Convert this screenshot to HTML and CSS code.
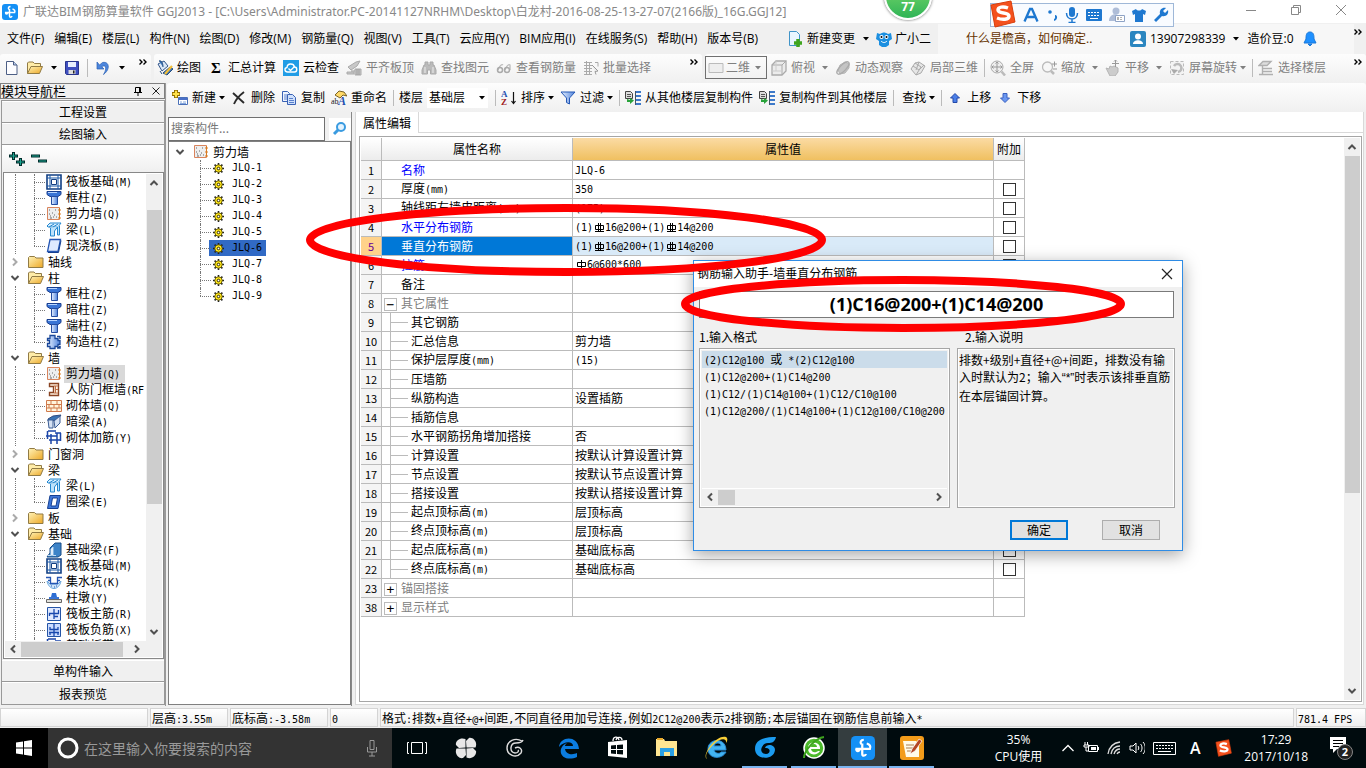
FILE: index.html
```html
<!DOCTYPE html>
<html lang="zh-CN">
<head>
<meta charset="utf-8">
<title>广联达BIM钢筋算量软件 GGJ2013</title>
<link rel="stylesheet" href="styles.css">
</head>
<body>
<svg class="defs" aria-hidden="true">
<defs>
<linearGradient id="gb" x1="0" x2="1"><stop offset="0" stop-color="#e8f1ff"/><stop offset="1" stop-color="#4f83dc"/></linearGradient>
<linearGradient id="gy" x1="0" y1="0" x2="1" y2="1"><stop offset="0" stop-color="#fff3b8"/><stop offset="1" stop-color="#eda826"/></linearGradient>
<symbol id="logo" viewBox="0 0 16 16"><rect width="16" height="16" rx="3" fill="#1590f5"/><path d="M8.500 2.500C6.500 2.500 6 4 6.800 5.500M7.500 5v7c0 1.500 2 1.500 2.500 0M3 8.500h9.500M3.500 8.500c0 2 2 2 2.500 0M10.500 5c2 .5 3 2 2 4" fill="none" stroke="#fff" stroke-width="1.500"/></symbol>
<symbol id="dot-gear" viewBox="0 0 11 11"><path d="M5.500 0v11M0 5.500h11M1.600 1.600l7.800 7.800M9.400 1.600l-7.800 7.800" stroke="#222" stroke-width="1.600"/><circle cx="5.500" cy="5.500" r="3.700" fill="#ffe619" stroke="#554b00" stroke-width=".8"/><circle cx="5.500" cy="5.500" r="1.300" fill="#fff" stroke="#332c00"/></symbol>
<symbol id="folder" viewBox="0 0 16 16"><path d="M.5 13.500V3.500l1-1h5l1.500 1.500h7v9.500z" fill="url(#gy)" stroke="#917b45"/></symbol>
<symbol id="folder-open" viewBox="0 0 16 16"><path d="M.5 13.500V3l1-1h4.500L7.500 3.500h6v3" fill="#ffeca8" stroke="#917b45"/><path d="M.5 13.500L4 6.500h11.500l-3 7z" fill="url(#gy)" stroke="#917b45"/></symbol>
<symbol id="raft" viewBox="0 0 16 16"><path d="M1 1h14v14H1z" fill="#fff" stroke="#123f83" stroke-width="1.600"/><path d="M4 1v14M12 1v14M1 4h14M1 12h14" stroke="#1d5aa8"/><path d="M5.500 5.500h5v5h-5z" fill="#fff" stroke="#123f83"/></symbol>
<symbol id="column" viewBox="0 0 16 16"><path d="M1 1.500h14v3l-3 2H4l-3-2z" fill="#3974d5" stroke="#183e8f"/><path d="M2 2.500h9" stroke="#b7d5ff"/><path d="M5.500 6.500h6v8h-6z" fill="url(#gb)" stroke="#244ca0"/></symbol>
<symbol id="wall" viewBox="0 0 16 16"><path d="M1.500 1.500h12v12h-12z" fill="#eee" stroke="#d9845d"/><path d="M3 4h1M6 7h1M4 10h1M8 9h1M9 4h1M5 12h1M10 11h1M7 11h1M3 8h1M4 12h1" stroke="#666"/><path d="M13.500 2v11M12 4h3M12 8h3M12 12h3" stroke="#d97a22"/></symbol>
<symbol id="beam" viewBox="0 0 16 16"><path d="M1 4l3-3h11l-3 4H2z" fill="#d6eeff" stroke="#2588cf"/><path d="M3 5l5-3M7 5l5-3" stroke="#2588cf"/><path d="M4.500 6v8h4v-5l3-4v8h2V4" fill="#bde2fb" stroke="#2588cf"/></symbol>
<symbol id="slab" viewBox="0 0 16 16"><path d="M4 1.500h10.500l-2.500 12H1.500z" fill="#dfeaff" stroke="#2456b4" stroke-width="1.300"/><path d="M2 14.500h10.500l2.500-12" fill="none" stroke="#153f92"/></symbol>
<symbol id="ring" viewBox="0 0 16 16"><path d="M4 1.500h10.500l-2.500 13H1.500z" fill="#3e77d9" stroke="#153f92"/><path d="M6.500 4h5l-1.500 8h-5z" fill="#fff" stroke="#153f92"/></symbol>
<symbol id="struct" viewBox="0 0 16 16"><path d="M4 1.500h5v3h3v2h2v4h-2v2H9v2H4v-2H1.500v-3h2v-3h-2V4.500H4z" fill="url(#gb)" stroke="#1a4799" stroke-width="1.300"/><path d="M11 2.500h3M14 5v-3M11 14h3v-2" stroke="#1a4799" stroke-width="1.500"/></symbol>
<symbol id="door" viewBox="0 0 16 16"><path d="M3.500 1.500h9v12h-9v-3h4v-6h-4z" fill="#fff2e2" stroke="#8a4423" stroke-width="1.400"/><path d="M9.500 4v7M8 4h4M9 7.500h3M8 11h4" stroke="#c07048"/></symbol>
<symbol id="brick" viewBox="0 0 16 16"><path d="M.5 2.500h15v11H.5z" fill="#fff4dd" stroke="#cf7a4c"/><path d="M1 6.500h14M1 10h14M5 3v3M11 3v3M8 7v3M3 7v3M13 7v3M5 10v3M11 10v3" stroke="#cf7a4c"/></symbol>
<symbol id="hidden-beam" viewBox="0 0 16 16"><path d="M2 5l5-3 8-1-4 5-9 1z" fill="#3974b5" stroke="#2d4a80"/><path d="M2 6h5v8H3zM8 7l6-5v7l-5 5z" fill="#d6e2f4" stroke="#3a5c94"/></symbol>
<symbol id="rebar" viewBox="0 0 16 16"><path d="M2 1h8M1.500 1v8M0 6h11M5 4v10M11 3v11M3 10h12M14.500 3v8M9 3h6" fill="none" stroke="#1c46a8" stroke-width="1.500"/></symbol>
<symbol id="fbeam" viewBox="0 0 16 16"><path d="M1 15l3-4V6l5-5h6v12l-3 2z" fill="#3d83c7" stroke="#174a85"/><path d="M2 13.500h3V7l2-2v8.500h3" fill="#fff" stroke="#c3ddf5"/></symbol>
<symbol id="pit" viewBox="0 0 16 16"><path d="M1 7c2 10 12 10 14 0l-3 3H4z" fill="#cfe6fb" stroke="#6aa6dc"/><path d="M0 3.500h4.500v6h7v-6H16M2 6.500h2M12 6.500h2" fill="none" stroke="#2456b4" stroke-width="1.300"/><path d="M5 12h1M8 13h1M10 12h1" stroke="#2456b4"/></symbol>
<symbol id="pier" viewBox="0 0 16 16"><path d="M5 7l1-4h4l1 4z" fill="#2d6ed3"/><path d="M3 7h10v2H3z" fill="#3974d5"/><path d="M.5 9.500h15v3H.5z" fill="#e3e3de" stroke="#666"/></symbol>
<symbol id="mainbar" viewBox="0 0 16 16"><path d="M1.500 1.500h13v13h-13z" fill="#dfe9ff" stroke="#2454a6"/><path d="M8 3v10M3.500 10V7.500h9V4M8 10.500h4" fill="none" stroke="#1747ad" stroke-width="1.300"/></symbol>
<symbol id="negbar" viewBox="0 0 16 16"><path d="M1.500 1.500h13v13h-13z" fill="#cbdcff" stroke="#2454a6"/><path d="M8 2v12M4 5v2.500h8V5M3 10.500h10M4 11v2M12 11v2" fill="none" stroke="#1747ad" stroke-width="1.300"/></symbol>
<symbol id="new" viewBox="0 0 16 16"><path d="M2.500 1.500h7l3.500 3.500v9.500h-10.500z" fill="#fdfdff" stroke="#4d5f85"/><path d="M9.500 1.500V5H13" fill="#bccdec" stroke="#4d5f85"/></symbol>
<symbol id="save" viewBox="0 0 16 16"><path d="M1.500 1.500h13v13h-12l-1-1z" fill="#3f4fc0" stroke="#28348c"/><path d="M4 2h8v5H4z" fill="#e8efff"/><path d="M4.500 10h7v4h-7z" fill="#ddd"/><path d="M9 10.500h1.500v3H9z" fill="#222"/></symbol>
<symbol id="undo" viewBox="0 0 16 16"><path d="M2 2v7h7L6.800 6.800C10.500 4 12.500 8 8.500 14.500 16 9 14 1 7.500 2.500L4.500 5z" fill="#4c86dc" stroke="#2a60b5" stroke-width=".7"/></symbol>
<symbol id="paint" viewBox="0 0 16 16"><path d="M1 4l6-3 4 5-6 5z" fill="#dbe8f7" stroke="#34568a"/><path d="M2 1c3-1 4 3 4 6M3 11l2 3M6 13l7-6 3 2-6 6z" fill="#3973b8" stroke="#244b7c"/><path d="M8 14l7-8" stroke="#f4bf38" stroke-width="2"/></symbol>
<symbol id="cloud" viewBox="0 0 16 16"><rect width="16" height="16" fill="#219de6"/><path d="M4.500 12C1.500 12 1 8 4 7.500 4.500 3 10.500 3 11.500 7c3 0 3 5 0 5z" fill="#219de6" stroke="#fff" stroke-width="1.400"/><path d="M5.500 8.500l2 2 4-4" stroke="#fff" fill="none" stroke-width="1.300"/></symbol>
<symbol id="align" viewBox="0 0 16 16"><path d="M2 7l8-5 4-1-3 5-6 4zM1 12h7v2H1zM9 9h6v6H9z" fill="#c8c8c8" stroke="#aaa"/><path d="M5 11h4M11 9v6M13 9v6" stroke="#999"/></symbol>
<symbol id="binoc" viewBox="0 0 16 16"><path d="M3 5h1V2h3v3h2V2h3v3h1l2 5v4H9.500v-4h-3v4H1v-4z" fill="#bbb" stroke="#aaa"/><path d="M4 7v6M12 7v6" stroke="#eee"/></symbol>
<symbol id="glasses" viewBox="0 0 16 16"><path d="M2 10c1-4 4-6 5-5M9 10c1-4 4-6 5-5v5" fill="none" stroke="#bbb" stroke-width="1.300"/><circle cx="4" cy="10" r="2.500" fill="none" stroke="#aaa" stroke-width="1.500"/><circle cx="11" cy="10" r="2.500" fill="none" stroke="#aaa" stroke-width="1.500"/></symbol>
<symbol id="batch" viewBox="0 0 16 16"><path d="M1 2.500h8M1 5.500h8M1 8.500h8M1 11.500h8M3.500 1v13M6.500 2v12M12 2.500h3v4M1 14.500h8" stroke="#aaa" fill="none"/><path d="M9 5l6 6-3 .5 1 3" fill="#eee" stroke="#999"/></symbol>
<symbol id="cube" viewBox="0 0 16 16"><path d="M1 5l4-4h10v10l-4 4H1z" fill="#ececec" stroke="#aaa" stroke-width="1.300"/><path d="M1 5h10v10M11 5l4-4" fill="none" stroke="#aaa"/><path d="M5 1v10H1M5 11h6" fill="none" stroke="#ccc"/></symbol>
<symbol id="orbit" viewBox="0 0 16 16"><path d="M5 5l5-3 4 2v4l-4 5-5 1-2-4z" fill="#c4c4c4" stroke="#b4b4b4"/><ellipse cx="8" cy="8" rx="8" ry="3" transform="rotate(-45 8 8)" fill="none" stroke="#aaa" stroke-width="1.300"/></symbol>
<symbol id="local3d" viewBox="0 0 16 16"><path d="M1 9l4-6 4-1 6 4-4 7-5 2z" fill="#e6e6e6" stroke="#aaa"/><path d="M5 3l6 4-5 8M3 6l6 4 5-5M9 2L6 10" fill="none" stroke="#aaa"/></symbol>
<symbol id="fit" viewBox="0 0 16 16"><circle cx="7" cy="7" r="6" fill="#eee" stroke="#aaa"/><path d="M7 2v10M2 7h10M5.500 3.500L7 2l1.500 1.500M5.500 10.500L7 12l1.500-1.500M3.500 5.500L2 7l1.500 1.500M10.500 5.500L12 7l-1.500 1.500" fill="none" stroke="#999"/><path d="M11.500 11.500l3.500 4" stroke="#bbb" stroke-width="2.500"/></symbol>
<symbol id="zoomer" viewBox="0 0 16 16"><circle cx="6.500" cy="7" r="5" fill="#f7f7f7" stroke="#bbb" stroke-width="1.300"/><path d="M10 11l3 3" stroke="#bbb" stroke-width="2.500"/><path d="M11 4h5M13.500 1.500v5M12 9h4" stroke="#999"/></symbol>
<symbol id="hand" viewBox="0 0 16 16"><path d="M1 8l3 1 1-3 2 1 2-1 4 2v4l-3 4H5z" fill="#ccc" stroke="#b4b4b4"/><path d="M10.500 0v7M7 3.500h7M9 1.500L10.500 0 12 1.500" fill="none" stroke="#999"/></symbol>
<symbol id="rotate" viewBox="0 0 16 16"><path d="M1.500 1.500h13v13h-13z" fill="#f3f3f3" stroke="#bbb" stroke-dasharray="3 2"/><path d="M5 6a4 4 0 1 1 4 6" fill="none" stroke="#bbb" stroke-width="2.500"/><path d="M2 9l3 5 4-4z" fill="#aaa"/></symbol>
<symbol id="floors" viewBox="0 0 16 16"><path d="M1 5.500l4-4h8l-4 4zM4 8.500h10M4 11.500h10M1 14.500h14M4.500 6v8" fill="#ddd" stroke="#b0b0b0" stroke-width="1.400"/></symbol>
<symbol id="add" viewBox="0 0 16 16"><path d="M4 0v8M0 4h8" stroke="#8e6b00" stroke-width="4"/><path d="M4 .7v6.600M.7 4h6.600" stroke="#ffe14a" stroke-width="2.200"/><path d="M6.500 7.500h9v7h-9z" fill="#fff" stroke="#4a70b8"/><path d="M7 8h8v2H7z" fill="#4a70c8"/><path d="M8 12h2M11 12h3M8 13.500h6" stroke="#86a7dc"/></symbol>
<symbol id="del" viewBox="0 0 16 16"><path d="M2 3l11 10M13 2C9 5 5 9 3 14" fill="none" stroke="#2b2b2b" stroke-width="1.900"/></symbol>
<symbol id="copy" viewBox="0 0 16 16"><path d="M1.500 1.500h5l2 2v8h-7z" fill="#eef4ff" stroke="#3a62b5"/><path d="M6.500 4.500h5l3 3v7h-8z" fill="#cfe0fb" stroke="#3a62b5"/><path d="M3 5h3M3 7h3M3 9h3M8 8.500h4M8 10.500h5M8 12.500h5" stroke="#5a80cc"/></symbol>
<symbol id="rename" viewBox="0 0 16 16"><path d="M4 5l4-4 5 1 3 4-4-1-3 3z" fill="#ffd968" stroke="#7a6326"/><text x="0" y="14" font-size="8" font-family="Liberation Serif" fill="#222">ab</text><text x="7" y="15" font-size="12" font-weight="bold" font-style="italic" font-family="Liberation Serif" fill="#1f50b0">A</text></symbol>
<symbol id="sort" viewBox="0 0 16 16"><text x="0" y="7" font-size="9" font-family="Liberation Serif" font-weight="bold" fill="#1f50b0">A</text><text x="0" y="15" font-size="9" font-family="Liberation Serif" font-weight="bold" fill="#a02020">Z</text><path d="M12.500 2v11M10.500 11l2 2.500 2-2.500" fill="none" stroke="#111" stroke-width="1.200"/></symbol>
<symbol id="filter" viewBox="0 0 16 16"><path d="M1 2h14L9.500 8v6l-3-1.500V8z" fill="url(#gb)" stroke="#2558b5"/></symbol>
<symbol id="copyfloor" viewBox="0 0 16 16"><path d="M.5 1.500h5l2 2v5h-7z" fill="#ddd" stroke="#444"/><path d="M2 4.500h4M2 6.500h4" stroke="#555"/><path d="M11 1h5v2h-5zM11 5h5v2h-5zM11 9h5v2h-5zM11 13h5v2h-5z" fill="#3d79c9"/><path d="M10.500 1v14" stroke="#456"/><path d="M2 9v3h3v2l4-3.500L5 8v2z" fill="#29a33b"/></symbol>
<symbol id="up" viewBox="0 0 10 10"><path d="M5 .5L9.500 5H7v4.500H3V5H.5z" fill="#4a7fe8" stroke="#2448a8"/></symbol>
<symbol id="dn" viewBox="0 0 10 10"><path d="M5 9.500L9.500 5H7V.5H3V5H.5z" fill="#6a97f0" stroke="#3a60c0"/></symbol>
<symbol id="tri" viewBox="0 0 6 4"><path d="M0 0h6L3 3.500z" fill="currentColor"/></symbol>
<symbol id="more" viewBox="0 0 8 6"><path d="M.5 .5L3 3 .5 5.500M4.500 .5L7 3 4.500 5.500" fill="none" stroke="#000" stroke-width="1.400"/></symbol>
<symbol id="chev" viewBox="0 0 10 10"><path d="M1.500 3L5 6.500 8.500 3" fill="none" stroke="#505050" stroke-width="2"/></symbol>
<symbol id="chevr" viewBox="0 0 10 10"><path d="M3 1.500L6.500 5 3 8.500" fill="none" stroke="currentColor" stroke-width="2"/></symbol>
<symbol id="chevl" viewBox="0 0 10 10"><path d="M7 1.500L3.500 5 7 8.500" fill="none" stroke="#505050" stroke-width="2"/></symbol>
<symbol id="chevu" viewBox="0 0 10 10"><path d="M1.500 7L5 3.500 8.500 7" fill="none" stroke="#505050" stroke-width="2"/></symbol>
<symbol id="bar3" viewBox="0 0 12 12"><path d="M2.500 3.500h8v4h-8zM5.500 1v9M7.500 1v9M2 9.500h9" fill="none" stroke="#000"/></symbol>
<symbol id="bar1" viewBox="0 0 12 12"><path d="M2.500 3.500h8v4h-8zM6.500 1v10" fill="none" stroke="#000"/></symbol>
<symbol id="sogou" viewBox="0 0 28 28"><path d="M3 5l20-4 4 21-20 5z" fill="#f4511e" stroke="#d83e0c"/><path d="M20 8c-5-2-10-1-10 2 0 4 11 2 11 6s-7 4-12 2" fill="none" stroke="#fff" stroke-width="3.500"/></symbol>
</defs>
</svg>

<header class="titlebar">
  <svg class="i16"><use href="#logo"/></svg>
  <h1>广联达BIM钢筋算量软件 GGJ2013 - [C:\Users\Administrator.PC-20141127NRHM\Desktop\白龙村-2016-08-25-13-27-07(2166版)_16G.GGJ12]</h1>
  <div class="winbtns">
    <button aria-label="最小化"><svg width="12" height="12"><path d="M1 6.500h10" stroke="#888"/></svg></button>
    <button aria-label="还原"><svg width="12" height="12"><path d="M1.500 3.500h7v7h-7zM3.500 3V1.500h7v7H9" fill="none" stroke="#888"/></svg></button>
    <button aria-label="关闭"><svg width="12" height="12"><path d="M1 1l10 10M11 1L1 11" stroke="#888"/></svg></button>
  </div>
</header>

<nav class="menubar">
  <div class="menus">
    <button>文件(F)</button><button>编辑(E)</button><button>楼层(L)</button><button>构件(N)</button><button>绘图(D)</button><button>修改(M)</button><button>钢筋量(Q)</button><button>视图(V)</button><button>工具(T)</button><button>云应用(Y)</button><button>BIM应用(I)</button><button>在线服务(S)</button><button>帮助(H)</button><button>版本号(B)</button>
  </div>
  <button class="tool"><svg class="i16" viewBox="0 0 16 16"><path d="M2.500 .5h7l3 3v11h-10z" fill="#e9f6ff" stroke="#4094c8"/><path d="M11 8v8M7 12h8" stroke="#3fa51e" stroke-width="3.500"/></svg>新建变更<svg class="tri"><use href="#tri"/></svg></button>
  <button class="tool helper"><svg class="i16" viewBox="0 0 16 16"><path d="M1 2l3 1c3-2 5-2 8 0l3-1 1 6-3 2v4l-3 2H6l-3-2v-4L0 8z" fill="#1c8fe0"/><circle cx="5.500" cy="6" r="2" fill="#fff"/><circle cx="10.500" cy="6" r="2" fill="#fff"/><circle cx="5.500" cy="6" r="1"/><circle cx="10.500" cy="6" r="1"/><path d="M5 10c2 2 4 2 6 0" stroke="#fff" fill="none"/></svg>广小二</button>
  <a class="news" href="#">什么是檐高，如何确定..</a>
  <div class="account">
    <button class="tool"><svg class="i16" viewBox="0 0 16 16"><rect width="16" height="16" rx="2" fill="#2b86c0"/><circle cx="8" cy="5.500" r="3" fill="#fff"/><path d="M3 13c0-5 10-5 10 0z" fill="#fff"/></svg>13907298339<svg class="tri"><use href="#tri"/></svg></button>
    <span class="beans">造价豆:0</span>
    <button class="tool" aria-label="通知"><svg class="i16" viewBox="0 0 16 16"><path d="M8 1c-4 0-4 4-4 7l-2 4h12l-2-4c0-3 0-7-4-7zM6 13h4l-2 2z" fill="#1e90ff" stroke="#1877d8"/></svg></button>
  </div>
  <svg class="more"><use href="#more"/></svg>
</nav>

<div class="toolbars">
  <div class="strip files">
    <button class="tool" aria-label="新建"><svg class="i16"><use href="#new"/></svg></button>
    <button class="tool" aria-label="打开"><svg class="i16"><use href="#folder-open"/></svg><svg class="tri"><use href="#tri"/></svg></button>
    <button class="tool" aria-label="保存"><svg class="i16"><use href="#save"/></svg></button>
    <i class="sep"></i>
    <button class="tool" aria-label="撤销"><svg class="i16"><use href="#undo"/></svg><svg class="tri"><use href="#tri"/></svg></button>
    <svg class="more"><use href="#more"/></svg>
  </div>
  <div class="strip draw">
    <button class="tool"><svg class="i16"><use href="#paint"/></svg>绘图</button>
    <button class="tool"><b class="sigma">Σ</b>汇总计算</button>
    <button class="tool"><svg class="i16"><use href="#cloud"/></svg>云检查</button>
    <button class="tool off"><svg class="i16"><use href="#align"/></svg>平齐板顶</button>
    <button class="tool off"><svg class="i16"><use href="#binoc"/></svg>查找图元</button>
    <button class="tool off"><svg class="i16"><use href="#glasses"/></svg>查看钢筋量</button>
    <button class="tool off"><svg class="i16"><use href="#batch"/></svg>批量选择</button>
    <svg class="more"><use href="#more"/></svg>
  </div>
  <div class="strip view">
    <button class="tool off boxed"><svg class="i16" viewBox="0 0 16 16"><path d="M1 3.500h14v9H1z" fill="#eee" stroke="#bbb"/></svg>二维<svg class="tri"><use href="#tri"/></svg></button>
    <button class="tool off"><svg class="i16"><use href="#cube"/></svg>俯视<svg class="tri wide"><use href="#tri"/></svg></button>
    <button class="tool off"><svg class="i16"><use href="#orbit"/></svg>动态观察</button>
    <button class="tool off"><svg class="i16"><use href="#local3d"/></svg>局部三维</button>
    <i class="sep"></i>
    <button class="tool off"><svg class="i16"><use href="#fit"/></svg>全屏</button>
    <button class="tool off"><svg class="i16"><use href="#zoomer"/></svg>缩放<svg class="tri wide"><use href="#tri"/></svg></button>
    <button class="tool off"><svg class="i16"><use href="#hand"/></svg>平移<svg class="tri wide"><use href="#tri"/></svg></button>
    <button class="tool off"><svg class="i16"><use href="#rotate"/></svg>屏幕旋转<svg class="tri near"><use href="#tri"/></svg></button>
    <i class="sep"></i>
    <button class="tool off"><svg class="i16"><use href="#floors"/></svg>选择楼层</button>
    <svg class="more"><use href="#more"/></svg>
  </div>
</div>

<main class="work">
  <aside class="nav">
    <div class="navtitle"><h2>模块导航栏</h2>
      <svg width="10" height="10"><path d="M2.500 1.500h5v5h-5zM6.500 1v6M1 6.500h8M5 7v3" fill="none" stroke="#000"/></svg>
      <svg width="10" height="10"><path d="M1.500 1.500l7 7M8.500 1.500l-7 7" stroke="#222"/></svg></div>
    <div class="navbody">
      <button class="mod">工程设置</button>
      <button class="mod">绘图输入</button>
      <div class="expand">
        <svg width="40" height="16"><path d="M5.500 0v8M1 4h9M12.500 6v8M8 10h9M23 4h9M30 9h9" stroke="#002b2b" stroke-width="3"/><path d="M5.500 1v6M2 4h7M12.500 7v6M9 10h7M24 4h7M31 9h7" stroke="#1aa58f"/></svg>
      </div>
      <div class="treebox">
        <div class="treeclip">
          <ul class="tree">
            <li><ul>
              <li><svg><use href="#raft"/></svg><span>筏板基础<span class="m">(M)</span></span></li>
              <li><svg><use href="#column"/></svg><span>框柱<span class="m">(Z)</span></span></li>
              <li><svg><use href="#wall"/></svg><span>剪力墙<span class="m">(Q)</span></span></li>
              <li><svg><use href="#beam"/></svg><span>梁<span class="m">(L)</span></span></li>
              <li><svg><use href="#slab"/></svg><span>现浇板<span class="m">(B)</span></span></li>
            </ul></li>
            <li><div class="branch shut"><svg class="tw"><use href="#chevr"/></svg><svg><use href="#folder"/></svg><span>轴线</span></div></li>
            <li><div class="branch"><svg class="tw"><use href="#chev"/></svg><svg><use href="#folder-open"/></svg><span>柱</span></div><ul>
              <li><svg><use href="#column"/></svg><span>框柱<span class="m">(Z)</span></span></li>
              <li><svg><use href="#column"/></svg><span>暗柱<span class="m">(Z)</span></span></li>
              <li><svg><use href="#column"/></svg><span>端柱<span class="m">(Z)</span></span></li>
              <li><svg><use href="#struct"/></svg><span>构造柱<span class="m">(Z)</span></span></li>
            </ul></li>
            <li><div class="branch"><svg class="tw"><use href="#chev"/></svg><svg><use href="#folder-open"/></svg><span>墙</span></div><ul>
              <li><svg><use href="#wall"/></svg><span class="cur">剪力墙<span class="m">(Q)</span></span></li>
              <li><svg><use href="#door"/></svg><span>人防门框墙<span class="m">(RF</span></span></li>
              <li><svg><use href="#brick"/></svg><span>砌体墙<span class="m">(Q)</span></span></li>
              <li><svg><use href="#hidden-beam"/></svg><span>暗梁<span class="m">(A)</span></span></li>
              <li><svg><use href="#rebar"/></svg><span>砌体加筋<span class="m">(Y)</span></span></li>
            </ul></li>
            <li><div class="branch shut"><svg class="tw"><use href="#chevr"/></svg><svg><use href="#folder"/></svg><span>门窗洞</span></div></li>
            <li><div class="branch"><svg class="tw"><use href="#chev"/></svg><svg><use href="#folder-open"/></svg><span>梁</span></div><ul>
              <li><svg><use href="#beam"/></svg><span>梁<span class="m">(L)</span></span></li>
              <li><svg><use href="#ring"/></svg><span>圈梁<span class="m">(E)</span></span></li>
            </ul></li>
            <li><div class="branch shut"><svg class="tw"><use href="#chevr"/></svg><svg><use href="#folder"/></svg><span>板</span></div></li>
            <li><div class="branch"><svg class="tw"><use href="#chev"/></svg><svg><use href="#folder-open"/></svg><span>基础</span></div><ul>
              <li><svg><use href="#fbeam"/></svg><span>基础梁<span class="m">(F)</span></span></li>
              <li><svg><use href="#raft"/></svg><span>筏板基础<span class="m">(M)</span></span></li>
              <li><svg><use href="#pit"/></svg><span>集水坑<span class="m">(K)</span></span></li>
              <li><svg><use href="#pier"/></svg><span>柱墩<span class="m">(Y)</span></span></li>
              <li><svg><use href="#mainbar"/></svg><span>筏板主筋<span class="m">(R)</span></span></li>
              <li><svg><use href="#negbar"/></svg><span>筏板负筋<span class="m">(X)</span></span></li>
              <li><svg><use href="#rebar"/></svg><span>基础板带<span class="m">(W)</span></span></li>
            </ul></li>
          </ul>
        </div>
        <div class="vbar"><svg><use href="#chevu"/></svg><i></i><svg><use href="#chev"/></svg></div>
        <div class="hbar"><svg><use href="#chevl"/></svg><i></i><svg><use href="#chevr"/></svg></div>
      </div>
      <button class="mod">单构件输入</button>
      <button class="mod">报表预览</button>
    </div>
  </aside>

  <div class="right">
    <div class="strip edit">
      <button class="tool"><svg class="i16"><use href="#add"/></svg>新建<svg class="tri near"><use href="#tri"/></svg></button>
      <button class="tool"><svg class="i16"><use href="#del"/></svg>删除</button>
      <button class="tool"><svg class="i16"><use href="#copy"/></svg>复制</button>
      <button class="tool"><svg class="i16"><use href="#rename"/></svg>重命名</button>
      <i class="sep"></i>
      <label for="floor">楼层</label>
      <span class="pick"><select id="floor"><option>基础层</option></select><svg class="tri"><use href="#tri"/></svg></span>
      <i class="sep"></i>
      <button class="tool"><svg class="i16"><use href="#sort"/></svg>排序<svg class="tri near"><use href="#tri"/></svg></button>
      <button class="tool"><svg class="i16"><use href="#filter"/></svg>过滤<svg class="tri near"><use href="#tri"/></svg></button>
      <i class="sep"></i>
      <button class="tool"><svg class="i16"><use href="#copyfloor"/></svg>从其他楼层复制构件</button>
      <button class="tool"><svg class="i16"><use href="#copyfloor"/></svg>复制构件到其他楼层</button>
      <i class="sep"></i>
      <button class="tool find">查找<svg class="tri near"><use href="#tri"/></svg></button>
      <i class="sep"></i>
      <button class="tool move"><svg class="i10"><use href="#up"/></svg>上移</button>
      <button class="tool move"><svg class="i10"><use href="#dn"/></svg>下移</button>
    </div>
    <div class="panes">
      <section class="parts">
        <div class="search"><input type="text" placeholder="搜索构件..." aria-label="搜索构件"><button aria-label="搜索"><svg width="16" height="16"><circle cx="9" cy="6" r="4" fill="#e3f3ff" stroke="#3a9be0" stroke-width="2"/><path d="M6 9l-4 4" stroke="#3a9be0" stroke-width="3"/></svg></button></div>
        <div class="partlist">
          <div class="branch"><svg class="tw"><use href="#chev"/></svg><svg class="i16"><use href="#wall"/></svg><span>剪力墙</span></div>
          <ul>
            <li><span><svg><use href="#dot-gear"/></svg>JLQ-1</span></li>
            <li><span><svg><use href="#dot-gear"/></svg>JLQ-2</span></li>
            <li><span><svg><use href="#dot-gear"/></svg>JLQ-3</span></li>
            <li><span><svg><use href="#dot-gear"/></svg>JLQ-4</span></li>
            <li><span><svg><use href="#dot-gear"/></svg>JLQ-5</span></li>
            <li><span class="on"><svg><use href="#dot-gear"/></svg>JLQ-6</span></li>
            <li><span><svg><use href="#dot-gear"/></svg>JLQ-7</span></li>
            <li><span><svg><use href="#dot-gear"/></svg>JLQ-8</span></li>
            <li><span><svg><use href="#dot-gear"/></svg>JLQ-9</span></li>
          </ul>
        </div>
      </section>
      <section class="props">
        <div class="tabs"><button class="tab">属性编辑</button></div>
        <div class="grid">
          <table>
            <colgroup><col class="c1"><col class="c2"><col class="c3"><col class="c4"></colgroup>
            <thead><tr><th></th><th>属性名称</th><th class="hot">属性值</th><th>附加</th></tr></thead>
            <tbody>
              <tr><td>1</td><td class="key">名称</td><td><span class="m">JLQ-6</span></td><td></td></tr>
              <tr><td>2</td><td>厚度<span class="m">(mm)</span></td><td><span class="m">350</span></td><td><input type="checkbox" aria-label="附加 2"></td></tr>
              <tr><td>3</td><td>轴线距左墙皮距离<span class="m">(mm)</span></td><td><span class="m">(175)</span></td><td><input type="checkbox" aria-label="附加 3"></td></tr>
              <tr><td>4</td><td class="key">水平分布钢筋</td><td><span class="m">(1)<svg><use href="#bar3"/></svg>16@200+(1)<svg><use href="#bar3"/></svg>14@200</span></td><td><input type="checkbox" aria-label="附加 4"></td></tr>
              <tr class="sel"><td>5</td><td>垂直分布钢筋</td><td><span class="m">(1)<svg><use href="#bar3"/></svg>16@200+(1)<svg><use href="#bar3"/></svg>14@200</span></td><td><input type="checkbox" aria-label="附加 5"></td></tr>
              <tr><td>6</td><td class="key">拉筋</td><td><span class="m"><svg><use href="#bar1"/></svg>6@600*600</span></td><td><input type="checkbox" aria-label="附加 6"></td></tr>
              <tr><td>7</td><td>备注</td><td></td><td></td></tr>
              <tr class="grp"><td>8</td><td><button aria-label="折叠">−</button>其它属性</td><td></td><td></td></tr>
              <tr class="sub"><td>9</td><td>其它钢筋</td><td></td><td></td></tr>
              <tr class="sub"><td>10</td><td>汇总信息</td><td>剪力墙</td><td></td></tr>
              <tr class="sub"><td>11</td><td>保护层厚度<span class="m">(mm)</span></td><td><span class="m">(15)</span></td><td></td></tr>
              <tr class="sub"><td>12</td><td>压墙筋</td><td></td><td></td></tr>
              <tr class="sub"><td>13</td><td>纵筋构造</td><td>设置插筋</td><td></td></tr>
              <tr class="sub"><td>14</td><td>插筋信息</td><td></td><td></td></tr>
              <tr class="sub"><td>15</td><td>水平钢筋拐角增加搭接</td><td>否</td><td></td></tr>
              <tr class="sub"><td>16</td><td>计算设置</td><td>按默认计算设置计算</td><td></td></tr>
              <tr class="sub"><td>17</td><td>节点设置</td><td>按默认节点设置计算</td><td></td></tr>
              <tr class="sub"><td>18</td><td>搭接设置</td><td>按默认搭接设置计算</td><td></td></tr>
              <tr class="sub"><td>19</td><td>起点顶标高<span class="m">(m)</span></td><td>层顶标高</td><td></td></tr>
              <tr class="sub"><td>20</td><td>终点顶标高<span class="m">(m)</span></td><td>层顶标高</td><td></td></tr>
              <tr class="sub"><td>21</td><td>起点底标高<span class="m">(m)</span></td><td>基础底标高</td><td><input type="checkbox" aria-label="附加 21"></td></tr>
              <tr class="sub last"><td>22</td><td>终点底标高<span class="m">(m)</span></td><td>基础底标高</td><td><input type="checkbox" aria-label="附加 22"></td></tr>
              <tr class="grp"><td>23</td><td><button aria-label="展开">+</button>锚固搭接</td><td></td><td></td></tr>
              <tr class="grp"><td>38</td><td><button aria-label="展开">+</button>显示样式</td><td></td><td></td></tr>
            </tbody>
          </table>
          <div class="vbar"><svg><use href="#chevu"/></svg><i></i><svg><use href="#chev"/></svg></div>
        </div>
      </section>
    </div>
  </div>
</main>

<footer class="status">
  <span class="s1"></span>
  <span class="s2">层高<span class="m">:3.55m</span></span>
  <span class="s3">底标高<span class="m">:-3.58m</span></span>
  <span class="s4"><span class="m">0</span></span>
  <span class="s5">格式<span class="m">:</span>排数<span class="m">+</span>直径<span class="m">+@+</span>间距<span class="m">,</span>不同直径用加号连接<span class="m">,</span>例如<span class="m">2C12@200</span>表示<span class="m">2</span>排钢筋<span class="m">;</span>本层锚固在钢筋信息前输入<span class="m">*</span></span>
  <span class="s6"><span class="m">781.4 FPS</span></span>
</footer>

<footer class="taskbar">
  <button class="start" aria-label="开始"><svg width="16" height="16"><path d="M0 2.500l7-1v6H0zM8 1.300l8-1.300v7.500H8zM0 8.500h7v6l-7-1zM8 8.500h8V16l-8-1.300z" fill="#fff"/></svg></button>
  <div class="cortana"><svg width="22" height="22"><circle cx="11" cy="11" r="9" fill="none" stroke="#fff" stroke-width="3"/></svg><input type="text" placeholder="在这里输入你要搜索的内容" aria-label="在这里输入你要搜索的内容"><svg width="12" height="18"><path d="M4 1.500h4v9H4zM1.500 8v5h9V8M6 13v4M3 17h6" fill="none" stroke="#999"/></svg></div>
  <div class="apps first">
    <button aria-label="任务视图"><svg width="22" height="16"><path d="M5.500 2.500h11v11h-11zM3 2.500H1.500v11H3M19 2.500h1.500v11H19" fill="none" stroke="#fff"/></svg></button>
    <button aria-label="风车"><svg width="22" height="22"><path d="M10.500 10.500V2C5 0 0 4 1 8l3 3zM11.500 10.500h9C23 5 18 0 14 1l-3 3zM11.500 11.500v9C17 23 22 18 21 14l-3-3zM10.500 11.500h-9C-1 17 4 22 8 21l3-3z" fill="#e8e8e8"/></svg></button>
    <button aria-label="G"><svg width="22" height="22"><path d="M18 4c-7-4-15 0-15 7s9 11 14 5c2-4-2-7-6-5M19 3c-1 3-4 3-7 3-6 0-7 9-1 10 3 0 4-2 3-3" fill="none" stroke="#ddd" stroke-width="1.400"/></svg></button>
  </div>
  <div class="apps">
    <button aria-label="Edge"><svg width="22" height="22"><path d="M1 10C2-1 20-2 21 12H7c1 6 8 6 12 4v4C10 24 1 20 3 12c1-3 3-5 6-6-2 2-2 2-2 3h8C15 4 6 4 1 10z" fill="#0b7ce0"/></svg></button>
    <button aria-label="应用商店"><svg width="22" height="24"><path d="M1 6l19-2v18L1 20z" fill="#fff"/><path d="M6 5c0-5 5-5 6-1M9 4c1-4 6-3 6 0" fill="none" stroke="#fff" stroke-width="1.300"/><path d="M4 9.500l5-.5v4H4zM10 9l6-.5V13h-6zM4 14h5v4l-5-.5zM10 14h6v4.500l-6-.5z" fill="#000b0e"/></svg></button>
    <button aria-label="文件资源管理器"><svg width="22" height="20"><path d="M0 1h8l1 2h12v15H0z" fill="#ffe692"/><path d="M1 0h6v2H1z" fill="#e8a92a"/><path d="M4 10h14v8h-4v-4H8v4H4z" fill="#2ba0e4"/></svg></button>
    <button aria-label="Internet Explorer"><svg width="24" height="24"><path d="M4 13C4 2 22 1 22 14H10c1 4 6 4 7 2h5C18 24 4 23 4 13zM10 10h7c0-4-6-4-7 0z" fill="#42b4f3" stroke="#2b8cd6"/><path d="M3 23C-3 20 12-2 22 1c3 2 0 6 0 6 1-6-7-4-12 1S0 19 3 23z" fill="#f8cf38"/></svg></button>
    <button class="run" aria-label="广联达"><svg width="24" height="24"><path d="M23 1c-8 0-21 1-21 12s19 12 20 1c0-5-8-7-10-2 6-1 6 6 1 6-8 0-5-11 2-11 4 0 7-1 8-6z" fill="#1b9cf0"/></svg></button>
    <button class="run" aria-label="360浏览器"><svg width="24" height="24"><circle cx="12" cy="12" r="10" fill="#4cb92b" stroke="#fff" stroke-width="1.500"/><path d="M6 12c0-8 13-7 12 1H9c1 5 6 3 7 2h2c-3 5-12 5-12-3zM9 11h6c0-4-6-4-6 0z" fill="#fff"/><path d="M2 22c0-8 12-20 20-21" stroke="#3da31e" stroke-width="2" fill="none"/></svg></button>
    <button class="run active" aria-label="钢筋算量"><svg width="24" height="24"><use href="#logo"/></svg></button>
    <button class="run" aria-label="便笺"><svg width="24" height="24"><rect width="24" height="24" rx="3" fill="#f39c1a"/><path d="M3 5h13l3 3v13H6z" fill="#fffbe9"/><path d="M6 9h8M6 12h7M7 15h4" stroke="#a97d50"/><path d="M10 18l2-5 7-10 3 2-7 10z" fill="#b54724" stroke="#fff" stroke-width=".7"/></svg></button>
  </div>
  <div class="tray">
    <div class="two cpu"><span>35%</span><span>CPU使用</span></div>
    <svg width="14" height="10"><path d="M1.500 8L7 2.500 12.500 8" fill="none" stroke="#fff" stroke-width="1.300"/></svg>
    <svg width="16" height="14"><path d="M5.500 4.500h9v6h-9zM15.500 6v3M2 1v3M4.500 1v3M1 4h5v2H1zM3 6v4h2" fill="none" stroke="#fff"/><path d="M8 6h5v3H8z" fill="#fff"/></svg>
    <svg width="14" height="14"><path d="M1 13C2 6 6 2 13 1M4 13c1-5 4-8 9-8M7 13c1-3 3-5 6-5M10 13c1-2 2-2 3-2" fill="none" stroke="#ddd" stroke-width="1.300"/></svg>
    <svg width="16" height="14"><path d="M1 5h3l3-3v10L4 9H1zM9 5c1 1 1 3 0 4M11.500 3c2 2 2 6 0 8M14 1c3 3 3 9 0 12" fill="none" stroke="#fff"/></svg>
    <svg width="23" height="13"><path d="M.5 .5h22v12H.5zM5 9.500h13" fill="none" stroke="#fff"/><path d="M3 3.500h17M3 6.500h17" stroke="#fff" stroke-dasharray="2 1"/></svg>
    <span class="ime">A</span>
    <svg width="18" height="18"><use href="#sogou"/></svg>
    <div class="two clock"><span>17:29</span><span>2017/10/18</span></div>
    <svg class="note" width="26" height="26"><path d="M2 2h16v12H9l-4 4v-4H2z" fill="#fff"/><path d="M5 5.500h10M5 8.500h10M5 11.500h6" stroke="#000"/><circle cx="17" cy="17" r="7.500" fill="#222" stroke="#888"/><text x="17" y="21" text-anchor="middle" font-size="11" font-weight="bold" font-family="Open Sans" fill="#fff">2</text></svg>
  </div>
</footer>

<div class="ball"><span>77</span></div>
<div class="imebar">
  <svg class="s" width="28" height="28"><use href="#sogou"/></svg>
  <svg width="16" height="16"><path d="M1.500 14.500L7 2h2l5.500 12.500M4 10h8" fill="none" stroke="#1e78d0" stroke-width="2.300"/></svg>
  <svg width="12" height="14"><circle cx="4" cy="4" r="1.800" fill="#1e78d0"/><path d="M9 8c2 0 1 4-1 4" fill="none" stroke="#1e78d0" stroke-width="2"/></svg>
  <svg width="14" height="16"><rect x="4" y="0" width="6" height="10" rx="3" fill="#1e78d0"/><path d="M1.500 6c0 8 11 8 11 0M7 12v3M3.500 15.500h7" fill="none" stroke="#1e78d0" stroke-width="1.500"/></svg>
  <svg width="16" height="14"><rect y="1" width="16" height="12" rx="1" fill="#1e78d0"/><path d="M2 4.500h12M2 7.500h12" stroke="#fff" stroke-dasharray="2 1"/><path d="M4 10.500h8" stroke="#fff"/></svg>
  <svg width="16" height="16"><circle cx="7" cy="4" r="3.500" fill="#aebdd8"/><path d="M0 14c0-9 12-9 12 0z" fill="#aebdd8"/><path d="M6.500 8.500h9v6h-9z" fill="#fff" stroke="#8ea3c6"/><path d="M9 10v3M12 10v1M12 12v1" stroke="#666"/></svg>
  <svg width="14" height="14"><path d="M4 1c1 2 5 2 6 0l4 2-1 4-2-1v8H3V6L1 7 0 3z" fill="#1e78d0"/></svg>
  <svg width="16" height="16"><path d="M1 13l6-6C6 2 10 0 13 1l-3 3 2 2 3-3c1 4-2 7-6 6l-6 6z" fill="#1e78d0"/></svg>
</div>

<section class="dialog" role="dialog" aria-labelledby="dt">
  <header><h2 id="dt">钢筋输入助手-墙垂直分布钢筋</h2><button aria-label="关闭"><svg width="12" height="12"><path d="M1 1l10 10M11 1L1 11" stroke="#222" stroke-width="1.200"/></svg></button></header>
  <div class="dbody">
    <input class="expr" type="text" value="(1)C16@200+(1)C14@200" aria-label="钢筋">
    <div class="cols">
      <div class="fmt"><h3>1.输入格式</h3>
        <div class="inset list">
          <ul><li class="on"><span class="m">(2)C12@100</span><span class="or">或</span><span class="m">*(2)C12@100</span></li><li><span class="m">(1)C12@200+(1)C14@200</span></li><li><span class="m">(1)C12/(1)C14@100+(1)C12/C10@100</span></li><li><span class="m">(1)C12@200/(1)C14@100+(1)C12@100/C10@200</span></li></ul>
          <div class="hbar"><svg><use href="#chevl"/></svg><i></i><svg><use href="#chevr"/></svg></div>
        </div>
      </div>
      <div class="desc"><h3>2.输入说明</h3>
        <div class="inset"><p>排数+级别+直径+@+间距，排数没有输入时默认为2；输入<span class="q">“*”</span>时表示该排垂直筋在本层锚固计算。</p></div>
      </div>
    </div>
    <div class="acts"><button class="ok">确定</button><button>取消</button></div>
  </div>
</section>

<svg class="marks" width="1366" height="768" aria-hidden="true"><g fill="none" stroke="#f00" stroke-width="8"><ellipse cx="566" cy="240" rx="256" ry="32"/><ellipse cx="903" cy="304" rx="218" ry="24"/></g></svg>
</body>
</html>
```
FILE: styles.css
```css
* { box-sizing: border-box; }
body {
  margin: 0;
  height: 100vh;
  display: flex;
  flex-direction: column;
  overflow: hidden;
  background: #f0f0f0;
  color: #000;
  font: 12px/16px "Open Sans", "Noto Sans CJK SC", sans-serif;
}
svg { flex: none; display: block; }
button, input, select { font: inherit; color: inherit; margin: 0; padding: 0; border: 0; background: none; border-radius: 0; outline: none; }
h1, h2, h3, ul, p { margin: 0; padding: 0; font: inherit; list-style: none; }
.defs { position: absolute; width: 0; height: 0; }
.m { font-family: "DejaVu Sans Mono", monospace; font-size: 10px; white-space: pre; }
.i16 { width: 16px; height: 16px; }
.i10 { width: 10px; height: 10px; }
.tri { width: 6px; height: 4px; margin-left: 4px; }
.tri.wide { margin-left: 3px; }
.tri.near { margin-left: -1px; }
.more { width: 8px; height: 6px; margin-left: auto; align-self: flex-start; margin-top: 5px; }
.sep { flex: none; width: 1px; height: 18px; background: #bbb; }

/* title bar */
.titlebar { flex: none; height: 23px; background: #fff; color: #888; display: flex; align-items: center; padding: 0 19px 0 2px; gap: 5px; }
.titlebar h1 { flex: 1; white-space: nowrap; font-family: "Noto Sans", "Noto Sans CJK SC", sans-serif; }
.winbtns { display: flex; gap: 33px; margin-bottom: 4px; }

/* menu bar */
.menubar { flex: none; height: 31px; display: flex; align-items: center; padding: 0 4px 0 7px; }
.menus { display: flex; gap: 10px; flex: 0 0 780px; }
.menubar button, .tool { white-space: nowrap; }
.tool { display: flex; align-items: center; gap: 4px; }
.off { color: #808080; }
.helper { margin-left: 7px; gap: 3px; }
.news { margin-left: 7px; padding: 7px 28px; flex: 1; color: #663300; background: #f7f7f7; text-decoration: none; white-space: nowrap; }
.account { display: flex; align-items: center; gap: 8px; flex: 0 0 230px; padding: 7px 6px; background: #f7f7f7; }
.menubar .more { margin-top: 6px; }

/* tool bars */
.toolbars { flex: none; height: 29px; display: flex; gap: 3px; }
.strip { display: flex; align-items: center; gap: 7px; background: linear-gradient(#fdfdfd, #f0f0f0); border-radius: 3px; padding: 0 4px 2px; }
.files { flex: 0 0 151px; }
.draw { flex: 0 0 548px; padding-left: 3px; }
.view { flex: 1; padding-left: 0; }
.boxed { border: 1px solid #707070; height: 23px; width: 62px; padding: 0 2px; gap: 2px; margin-right: -3px; }
.boxed .tri { margin-left: 3px; }
.sigma { width: 16px; font: bold 15px/16px "Liberation Serif", serif; text-align: center; }
.view .sep { margin: 0 -2px 0 -1px; }

/* work area */
.work { flex: 1; min-height: 0; display: flex; }
.nav { flex: 0 0 166px; display: flex; flex-direction: column; border-right: 1px solid #999; font-family: "Noto Sans CJK SC", sans-serif; }
.navtitle { height: 16px; border: 1px solid #808080; display: flex; align-items: center; gap: 8px; padding-right: 3px; }
.navtitle h2 { flex: 1; font-size: 13px; line-height: 14px; }
.navbody { flex: 1; min-height: 0; margin: 1px 0 1px 1px; border: 1px solid #999; display: flex; flex-direction: column; }
.mod { flex: none; height: 22px; border-bottom: 1px solid #999; border-top: 1px solid #fff; }
.mod:last-child { border-bottom: 0; }
.expand { flex: none; height: 27px; padding: 7px 6px; background: linear-gradient(#fff, #efefef); }
.treebox { flex: 1; min-height: 0; margin: 0 0 1px 1px; border: 1px solid #888; background: #fff; display: grid; grid-template: minmax(0, 1fr) 16px / minmax(0, 1fr) 16px; padding: 1px; }
.treeclip { overflow: hidden; }
.tree svg { width: 16px; height: 16px; }
.branch { display: flex; height: 16px; align-items: center; gap: 4px; }
.branch .tw { width: 10px; height: 10px; color: #aaa; }
.tree .branch { padding-left: 5px; }
.tree .tw { margin-right: 4px; }
.tree > li > ul { margin-left: 10px; border-left: 1px dotted #777; }
.tree ul li { position: relative; display: flex; align-items: center; height: 16px; padding-left: 30px; white-space: nowrap; gap: 2px; }
.tree ul li > span { padding: 0 2px; line-height: 16px; }
.tree ul li::before, .partlist li::before { content: ""; position: absolute; left: 18px; top: 0; height: 16px; border-left: 1px dotted #777; }
.tree ul li:last-child::before, .partlist li:last-child::before { height: 8px; }
.tree > li:last-child ul li:last-child::before { height: 16px; }
.tree ul li::after, .partlist li::after { content: ""; position: absolute; left: 18px; top: 8px; width: 11px; border-top: 1px dotted #777; }
.tree .cur { background: #d9d9d9; padding-right: 5px; }
.vbar { background: #f0f0f0; width: 16px; display: flex; flex-direction: column; align-items: center; }
.vbar svg, .hbar svg { width: 10px; height: 10px; color: #505050; }
.vbar svg { margin: 4px 0; }
.vbar svg:last-child { margin-top: auto; }
.vbar i { width: 15px; background: #cdcdcd; }
.treebox .vbar i { flex: 0 0 63%; margin-top: 18px; }
.hbar { background: #f0f0f0; height: 16px; display: flex; align-items: center; grid-column: 1 / 3; }
.hbar svg { margin: 0 3px; }
.hbar i { height: 15px; background: #cdcdcd; }
.treebox .hbar i { width: 102px; }
.treebox .hbar svg:last-child { margin-left: 9px; }

.right { flex: 1; min-width: 0; display: flex; flex-direction: column; }
.edit { flex: none; height: 29px; padding: 0 5px; margin-left: 1px; }
.edit .tool { margin-right: -1px; }
.edit .sep { height: 16px; margin: 0 -2px 0 0; }
.edit label { white-space: nowrap; }
.pick { display: flex; align-items: center; background: #fff; width: 61px; height: 20px; padding-right: 2px; margin-left: -3px; }
.pick select { appearance: none; flex: 1; min-width: 0; padding-left: 2px; }
.pick .tri { margin-right: 1px; }
.edit .find { margin-left: 3px; }
.edit .move { gap: 7px; margin-left: 3px; }
.panes { flex: 1; min-height: 0; display: flex; }
.parts { flex: 0 0 186px; padding-left: 2px; padding-top: 4px; display: flex; flex-direction: column; padding-bottom: 1px; border-right: 1px solid #888; }
.search { display: flex; align-items: center; height: 25px; gap: 4px; }
.search input { width: 157px; height: 24px; border: 1px solid #707070; background: #fff; padding: 0 2px 2px; font-family: "Noto Sans CJK SC", sans-serif; }
.search input::placeholder { color: #777; }
.search button { background: #fff; padding: 3px; }
.partlist { flex: 1; border: 1px solid #808080; background: #fff; padding: 2px 0 0 6px; font-family: "Noto Sans CJK SC", sans-serif; }
.partlist .branch .tw { margin-right: 4px; }
.partlist ul { margin-left: 7px; }
.partlist li { position: relative; height: 16px; padding-left: 27px; font: 10px/16px "DejaVu Sans Mono", monospace; }
.partlist li > span { display: inline-flex; align-items: center; gap: 8px; height: 16px; padding: 0 4px; }
.partlist li svg { width: 11px; height: 11px; }
.partlist .on { background: #316ac5; }

/* property grid */
.props { flex: 1; min-width: 0; margin: 0 2px 1px 3px; border: 1px solid #d9d9d9; border-top: 0; display: flex; flex-direction: column; font-family: "Noto Sans CJK SC", sans-serif; background: #fff; }
.tabs { flex: none; height: 21px; border-bottom: 1px solid #d9d9d9; }
.tab { width: 63px; height: 21px; background: #fff; border-right: 1px solid #d9d9d9; }
.grid { flex: 1; min-height: 0; margin: 3px 1px 2px 3px; border: 1px solid #a6a6a6; padding: 1px; display: flex; justify-content: space-between; }
table { table-layout: fixed; width: 664px; border-spacing: 0; align-self: flex-start; }
.c1 { width: 21px; } .c2 { width: 191px; } .c3 { width: 421px; } .c4 { width: 31px; }
th { height: 23px; padding: 0; font-weight: normal; background: linear-gradient(#fff, #ececec); border: solid #bbb; border-width: 0 1px 1px 0; }
th.hot { background: linear-gradient(#fbdba4, #f0c060); }
td { height: 19px; padding: 0 0 0 2px; line-height: 16px; white-space: nowrap; border: solid #bbb; border-width: 0 1px 1px 0; position: relative; }
td:first-child { padding: 0; text-align: center; background: #f4f4f4; font: 11px/16px "Noto Sans CJK SC", sans-serif; }
td:nth-child(2) { padding-left: 19px; }
td:last-child { padding: 0; text-align: center; }
td .m { display: inline-flex; align-items: center; }
td .m svg { width: 12px; height: 12px; }
.key { color: #00f; }
.sel td { background: #d9eaf8; }
.sel td:first-child { background: #ffd28a; color: #609; }
.sel td:nth-child(2) { background: #0078d7; color: #fff; }
.sel td:last-child { background: #fff; }
.grp td:nth-child(2) { color: #808080; padding-left: 2px; }
.grp button { width: 13px; height: 13px; border: 1px solid #bbb; font: 13px/10px "DejaVu Sans Mono", monospace; color: #000; margin-right: 4px; vertical-align: middle; background: #fff; }
.sub td:nth-child(2) { padding-left: 29px; }
.sub td:nth-child(2)::before { content: ""; position: absolute; left: 8px; top: 0; bottom: -1px; width: 17px; border-left: 1px solid #bbb; background: linear-gradient(#bbb, #bbb) 0 9px / 100% 1px no-repeat; }
td input { appearance: none; width: 13px; height: 13px; border: 1px solid #333; background: #fff; display: block; margin: 0 auto; }
.grid .vbar i { flex: 0 0 60%; }

/* status bar */
.status { flex: none; height: 22px; display: flex; gap: 2px; padding: 2px 0 1px; font-family: "Noto Sans CJK SC", sans-serif; }
.status > span { border: 1px solid #d4d4d4; background: linear-gradient(#fff, #efefef); line-height: 17px; padding-left: 1px; white-space: nowrap; overflow: hidden; }
.s1 { width: 148px; } .s2 { width: 78px; } .s3 { width: 98px; } .s4 { width: 48px; } .s5 { flex: 1; } .s6 { width: 70px; }

/* taskbar */
.taskbar { flex: none; height: 40px; background: #000b0e; color: #fff; display: flex; font-size: 12px; }
.start { width: 48px; background: #000; display: grid; place-items: center; }
.cortana { width: 344px; background: #333; display: flex; align-items: center; gap: 5px; padding: 0 14px 0 9px; }
.cortana input { flex: 1; min-width: 0; font-size: 14px; font-family: "Noto Sans CJK SC", sans-serif; }
.cortana input::placeholder { color: #999; }
.apps { display: flex; }
.apps.first { margin-right: 5px; }
.apps button { width: 49px; display: grid; place-items: center; border-bottom: 2px solid transparent; padding-top: 2px; }
.apps .run { border-image: linear-gradient(90deg, transparent 4px, #7ab4f0 4px, #7ab4f0 45px, transparent 45px) 2; }
.apps .active { background: #343d3f; border-image: none; border-color: #7ab4f0; }
.tray { margin-left: auto; display: flex; align-items: center; gap: 8px; padding-right: 12px; }
.two { display: flex; flex-direction: column; align-items: center; line-height: 17px; white-space: nowrap; }
.cpu { margin-right: 11px; }
.clock { margin: 0 12px 0 4px; }
.ime { font: 600 16px/20px "Open Sans", sans-serif; width: 14px; text-align: center; margin: 0 4px; }

/* floating layers */
.ball { position: absolute; left: 884px; top: -28px; width: 48px; height: 48px; border-radius: 50%; border: 2px solid #fff; box-shadow: 0 0 3px #555; background: linear-gradient(#8fe06e, #2fb457); color: #fff; display: flex; align-items: flex-end; justify-content: center; padding-bottom: 3px; font-weight: bold; }
.imebar { position: absolute; left: 990px; top: 3px; width: 184px; height: 24px; border: 1px solid #9fb8d8; background: #f8fbff; display: flex; align-items: center; justify-content: space-between; padding-right: 4px; }
.imebar .s { margin: -2px 0 0 -3px; }
.dialog { position: absolute; left: 693px; top: 260px; width: 490px; height: 291px; border: 1px solid #2f8ce5; background: #f0f0f0; box-shadow: 0 4px 16px rgba(0, 0, 0, .35); display: flex; flex-direction: column; font-family: "Noto Sans CJK SC", sans-serif; }
.dialog header { height: 26px; background: #fff; display: flex; align-items: center; justify-content: space-between; padding: 0 9px 0 3px; }
.dialog h2 { line-height: 14px; margin-bottom: 2px; }
.dbody { flex: 1; padding: 4px 7px 10px 4px; display: flex; flex-direction: column; }
.expr { height: 27px; margin: 0 1px; border: 1px solid #7a7a7a; background: #fff; text-align: center; font: bold 18px/20px "Open Sans", sans-serif; padding-bottom: 2px; }
.cols { flex: 1; display: flex; gap: 6px; margin-top: 11px; min-height: 0; }
.cols > div { display: flex; flex-direction: column; }
.fmt { width: 252px; }
.desc { flex: 1; }
.desc h3 { padding-left: 9px; }
.fmt h3 { padding-left: 1px; }
.inset { flex: 1; margin: 3px 0 0 1px; border: 1px solid #a6a6a6; outline: 1px solid #fff; outline-offset: -2px; padding: 2px; }
.desc .inset { padding: 2px 0 2px 1px; }
.list { display: flex; flex-direction: column; justify-content: space-between; }
.list li { height: 17px; padding-left: 2px; white-space: nowrap; line-height: 15px; }
.list .on { background: #cbdcea; }
.or { padding: 0 6px; }
.q { font-family: "Liberation Sans", sans-serif; }
.list .hbar { border-top: 1px solid #fff; justify-content: space-between; height: 17px; }
.list .hbar i { width: 17px; margin-right: auto; }
.desc p { line-height: 17px; }
.acts { display: flex; justify-content: flex-end; gap: 34px; margin: 12px 15px 0 0; }
.acts button { width: 58px; height: 20px; background: #e1e1e1; border: 1px solid #adadad; }
.acts .ok { border: 2px solid #0078d7; }
.marks { position: absolute; left: 0; top: 0; pointer-events: none; }
```
